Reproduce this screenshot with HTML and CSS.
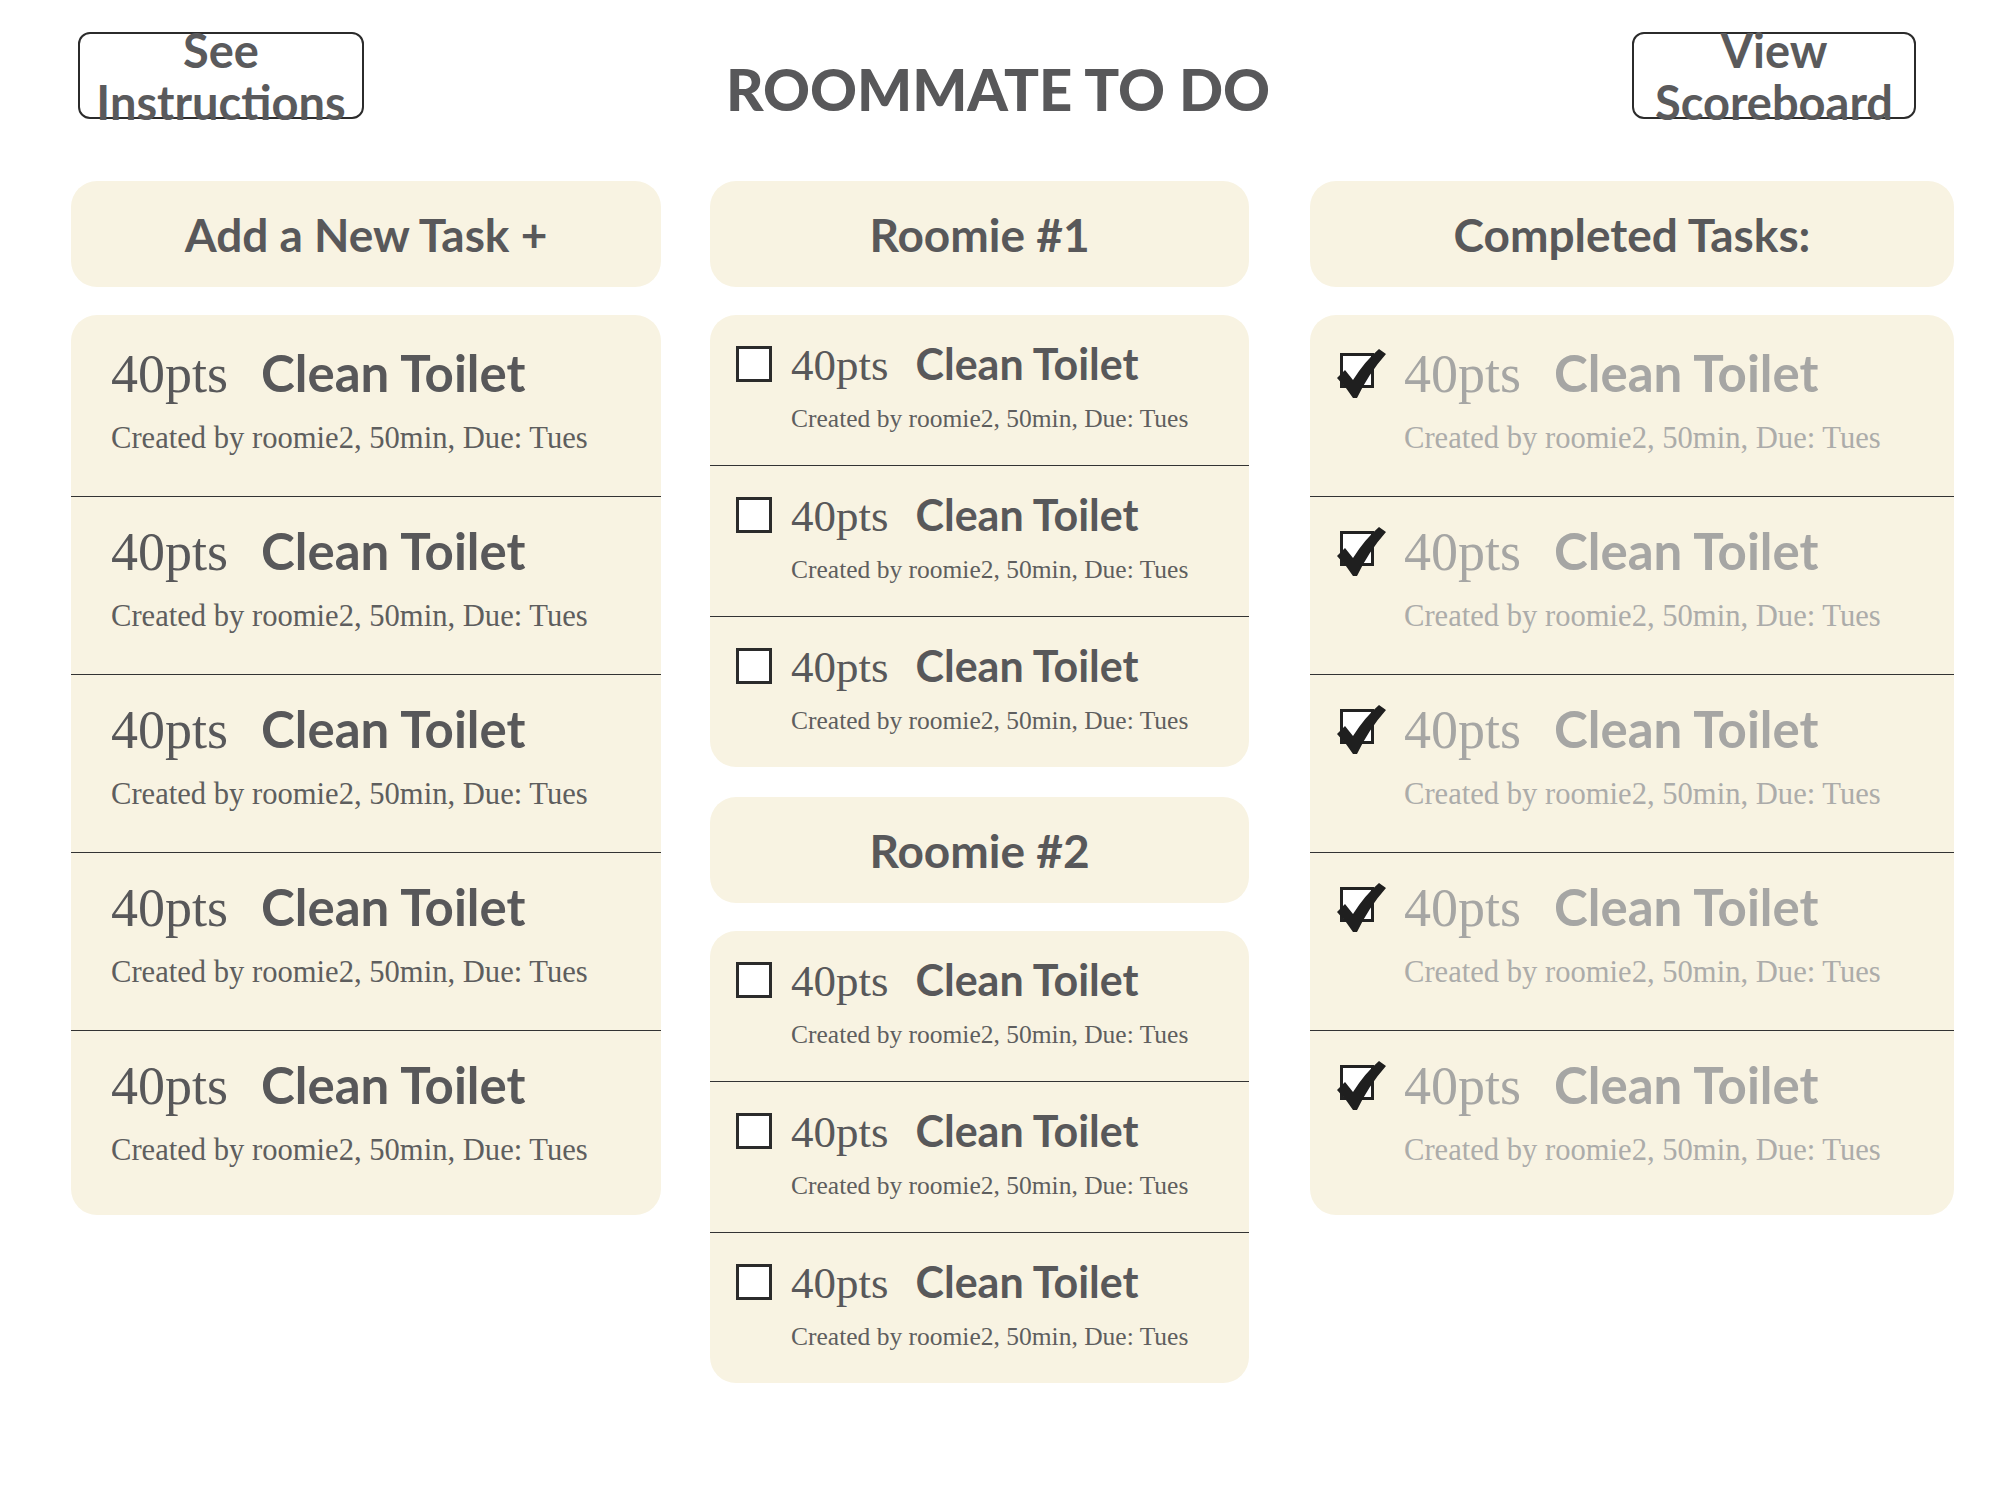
FILE: index.html
```html
<!DOCTYPE html>
<html lang="en">
<head>
<meta charset="utf-8">
<title>Roommate To Do</title>
<link rel="stylesheet" href="styles.css">
</head>
<body>
<header class="top">
  <a class="btn">See<br>Instructions</a>
  <h1 class="title">ROOMMATE TO DO</h1>
  <a class="btn btn-right">View<br>Scoreboard</a>
</header>

<main class="board">
  <section class="col col-add">
    <div class="head">Add a New Task +</div>
    <div class="list">
      <div class="task plain"><div class="line"><span class="pts">40pts</span><span class="name">Clean Toilet</span></div><div class="meta">Created by roomie2, 50min, Due: Tues</div></div>
      <div class="task plain"><div class="line"><span class="pts">40pts</span><span class="name">Clean Toilet</span></div><div class="meta">Created by roomie2, 50min, Due: Tues</div></div>
      <div class="task plain"><div class="line"><span class="pts">40pts</span><span class="name">Clean Toilet</span></div><div class="meta">Created by roomie2, 50min, Due: Tues</div></div>
      <div class="task plain"><div class="line"><span class="pts">40pts</span><span class="name">Clean Toilet</span></div><div class="meta">Created by roomie2, 50min, Due: Tues</div></div>
      <div class="task plain"><div class="line"><span class="pts">40pts</span><span class="name">Clean Toilet</span></div><div class="meta">Created by roomie2, 50min, Due: Tues</div></div>
    </div>
  </section>

  <section class="col col-roomies">
    <div class="head">Roomie #1</div>
    <div class="list">
      <div class="task sm"><span class="box"></span><div class="body"><div class="line"><span class="pts">40pts</span><span class="name">Clean Toilet</span></div><div class="meta">Created by roomie2, 50min, Due: Tues</div></div></div>
      <div class="task sm"><span class="box"></span><div class="body"><div class="line"><span class="pts">40pts</span><span class="name">Clean Toilet</span></div><div class="meta">Created by roomie2, 50min, Due: Tues</div></div></div>
      <div class="task sm"><span class="box"></span><div class="body"><div class="line"><span class="pts">40pts</span><span class="name">Clean Toilet</span></div><div class="meta">Created by roomie2, 50min, Due: Tues</div></div></div>
    </div>
    <div class="head head-second">Roomie #2</div>
    <div class="list">
      <div class="task sm"><span class="box"></span><div class="body"><div class="line"><span class="pts">40pts</span><span class="name">Clean Toilet</span></div><div class="meta">Created by roomie2, 50min, Due: Tues</div></div></div>
      <div class="task sm"><span class="box"></span><div class="body"><div class="line"><span class="pts">40pts</span><span class="name">Clean Toilet</span></div><div class="meta">Created by roomie2, 50min, Due: Tues</div></div></div>
      <div class="task sm"><span class="box"></span><div class="body"><div class="line"><span class="pts">40pts</span><span class="name">Clean Toilet</span></div><div class="meta">Created by roomie2, 50min, Due: Tues</div></div></div>
    </div>
  </section>

  <section class="col col-done">
    <div class="head">Completed Tasks:</div>
    <div class="list">
      <div class="task done"><span class="box checked"><svg class="tick" viewBox="0 -2 50 50"><path d="M0 27 L8 19 Q12 24 16 29 Q28 10 42 -2 L49 3 Q32 22 20 47 L16 47 Q9 36 0 27 Z"/></svg></span><div class="body"><div class="line"><span class="pts">40pts</span><span class="name">Clean Toilet</span></div><div class="meta">Created by roomie2, 50min, Due: Tues</div></div></div>
      <div class="task done"><span class="box checked"><svg class="tick" viewBox="0 -2 50 50"><path d="M0 27 L8 19 Q12 24 16 29 Q28 10 42 -2 L49 3 Q32 22 20 47 L16 47 Q9 36 0 27 Z"/></svg></span><div class="body"><div class="line"><span class="pts">40pts</span><span class="name">Clean Toilet</span></div><div class="meta">Created by roomie2, 50min, Due: Tues</div></div></div>
      <div class="task done"><span class="box checked"><svg class="tick" viewBox="0 -2 50 50"><path d="M0 27 L8 19 Q12 24 16 29 Q28 10 42 -2 L49 3 Q32 22 20 47 L16 47 Q9 36 0 27 Z"/></svg></span><div class="body"><div class="line"><span class="pts">40pts</span><span class="name">Clean Toilet</span></div><div class="meta">Created by roomie2, 50min, Due: Tues</div></div></div>
      <div class="task done"><span class="box checked"><svg class="tick" viewBox="0 -2 50 50"><path d="M0 27 L8 19 Q12 24 16 29 Q28 10 42 -2 L49 3 Q32 22 20 47 L16 47 Q9 36 0 27 Z"/></svg></span><div class="body"><div class="line"><span class="pts">40pts</span><span class="name">Clean Toilet</span></div><div class="meta">Created by roomie2, 50min, Due: Tues</div></div></div>
      <div class="task done"><span class="box checked"><svg class="tick" viewBox="0 -2 50 50"><path d="M0 27 L8 19 Q12 24 16 29 Q28 10 42 -2 L49 3 Q32 22 20 47 L16 47 Q9 36 0 27 Z"/></svg></span><div class="body"><div class="line"><span class="pts">40pts</span><span class="name">Clean Toilet</span></div><div class="meta">Created by roomie2, 50min, Due: Tues</div></div></div>
    </div>
  </section>
</main>
</body>
</html>
```

FILE: styles.css
```css
* { box-sizing: border-box; }

html, body {
  margin: 0;
  padding: 0;
  background: #ffffff;
}

body {
  width: 2000px;
  min-height: 1500px;
  font-family: "Liberation Serif", serif;
  color: #58585a;
}

/* ---------- top bar ---------- */
.top {
  display: flex;
  justify-content: space-between;
  align-items: flex-start;
  padding: 32px 84px 0 78px;
  height: 181px;
}

.btn {
  width: 286px;
  height: 87px;
  border: 2.5px solid #2b2b2b;
  border-radius: 12px;
  display: flex;
  align-items: center;
  justify-content: center;
  text-align: center;
  font-family: "Lato", "Liberation Sans", sans-serif;
  font-weight: 700;
  font-size: 47px;
  line-height: 52px;
  color: #5a5a5c;
  overflow: visible;
  white-space: nowrap;
}

.btn-right {
  width: 284px;
}

.title {
  margin: 21px 0 0;
  font-family: "Lato", "Liberation Sans", sans-serif;
  font-weight: 900;
  font-size: 58px;
  line-height: 72px;
  color: #58585a;
}

/* ---------- board ---------- */
.board {
  display: flex;
  align-items: flex-start;
  padding-left: 71px;
}

.col {
  display: flex;
  flex-direction: column;
  gap: 28px;
}

.col-add {
  width: 590px;
}

.col-roomies {
  width: 539px;
  margin-left: 49px;
}

.col-done {
  width: 644px;
  margin-left: 61px;
}

.head {
  height: 106px;
  border-radius: 26px;
  background: #f8f3e2;
  display: flex;
  align-items: center;
  justify-content: center;
  font-family: "Lato", "Liberation Sans", sans-serif;
  font-weight: 700;
  font-size: 46px;
  color: #58585a;
}

.head-second {
  margin-top: 2px;
}

.list {
  background: #f8f3e2;
  border-radius: 26px;
  overflow: hidden;
}

/* ---------- task rows ---------- */
.task {
  padding: 24px 40px 40px;
  border-top: 1px solid #333333;
}

.task:first-child {
  border-top: none;
  padding-top: 28px;
}

.task:last-child {
  padding-bottom: 47px;
}

.line {
  display: flex;
  align-items: baseline;
  line-height: 60px;
  white-space: nowrap;
}

.pts {
  font-family: "Liberation Serif", serif;
  font-size: 54px;
  color: #58585a;
}

.name {
  margin-left: 33px;
  font-family: "Lato", "Liberation Sans", sans-serif;
  font-weight: 700;
  font-size: 51px;
  color: #58585a;
}

.meta {
  margin-top: 16px;
  font-family: "Liberation Serif", serif;
  font-size: 30.6px;
  line-height: 36px;
  color: #5e5e5e;
  white-space: nowrap;
}

/* small (roomie) rows */
.task.sm {
  display: flex;
  align-items: flex-start;
  padding: 23px 26px 31px;
  gap: 19px;
}

.task.sm:first-child {
  padding-top: 23px;
}

.task.sm:last-child {
  padding-bottom: 31px;
}

.task.sm .line {
  line-height: 52px;
}

.task.sm .pts {
  font-size: 45px;
}

.task.sm .name {
  font-size: 43px;
  margin-left: 27px;
}

.task.sm .meta {
  margin-top: 13px;
  font-size: 25.5px;
  line-height: 30px;
}

/* checkboxes */
.box {
  flex: none;
  width: 36px;
  height: 36px;
  margin-top: 8px;
  background: #ffffff;
  border: 3px solid #2b2b2b;
  position: relative;
}

/* completed rows */
.task.done {
  display: flex;
  align-items: flex-start;
  padding: 24px 30px 40px;
  gap: 30px;
}

.task.done:first-child {
  padding-top: 28px;
}

.task.done:last-child {
  padding-bottom: 47px;
}

.box.checked {
  width: 34px;
  height: 35px;
  margin-top: 10px;
  border-color: #222222;
}

.tick {
  position: absolute;
  left: -6px;
  top: -7px;
  width: 50px;
  height: 50px;
  fill: #1f1f1f;
  overflow: visible;
}

.task.done .pts,
.task.done .name {
  color: #a6a6a4;
}

.task.done .meta {
  color: #acacaa;
}
```
